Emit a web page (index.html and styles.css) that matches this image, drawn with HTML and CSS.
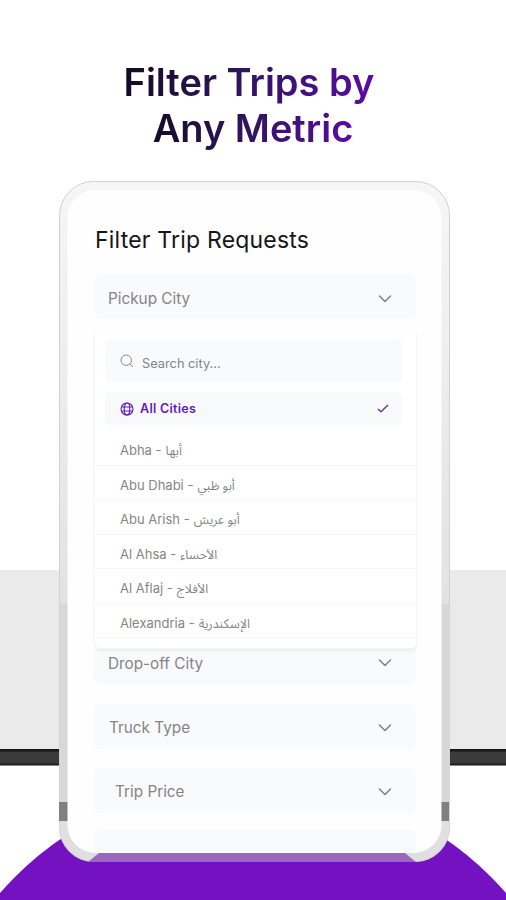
FILE: index.html
```html
<!DOCTYPE html>
<html lang="en">
<head>
<meta charset="utf-8">
<title>Filter Trips by Any Metric</title>
<link rel="stylesheet" href="styles.css">
</head>
<body>
<main class="poster">
  <svg class="backdrop" viewBox="0 0 506 900" aria-hidden="true">
    <defs>
      <linearGradient id="bar" x1="0" x2="0" y1="0" y2="1"><stop offset="0" stop-color="#111"/><stop offset=".12" stop-color="#1c1c1c"/><stop offset=".2" stop-color="#3b3b3b"/><stop offset=".82" stop-color="#3b3b3b"/><stop offset="1" stop-color="#111"/></linearGradient>
    </defs>
    <rect y="570" width="506" height="179" fill="#eaeaea"/>
    <rect y="749" width="506" height="16.5" fill="url(#bar)"/>
    <circle cx="253" cy="1115" r="336.6" fill="#7412c2"/>
  </svg>
  <h1 class="headline"><span class="line line-a">Filter Trips by</span><span class="line line-b">Any Metric</span></h1>
  <section class="phone">
    <svg class="frame" viewBox="0 0 391 681" aria-hidden="true">
      <defs>
        <linearGradient id="rim" x1="0" x2="0" y1="0" y2="1"><stop offset="0" stop-color="#f6f6f6"/><stop offset=".2" stop-color="#f0f0f0"/><stop offset=".4" stop-color="#e9e9e9"/><stop offset=".62" stop-color="#e2e2e2"/><stop offset=".622" stop-color="#d8d8d8"/><stop offset=".91" stop-color="#d8d8d8"/><stop offset=".945" stop-color="#e0e0e0"/><stop offset="1" stop-color="#dfdfdf"/></linearGradient>
        <linearGradient id="edge" x1="0" x2="0" y1="0" y2="1"><stop offset="0" stop-color="#cfcfcf"/><stop offset="1" stop-color="#d4d4d4"/></linearGradient>
      </defs>
      <rect x=".5" y=".5" width="390" height="680" rx="34" fill="url(#rim)" stroke="url(#edge)"/>
      <path d="M0 621h9v19H0zM382 621h8v19h-8z" fill="#808080"/>
      <path d="M40 672H346L357 681H29Z" fill="#9b68bd"/>
      <rect x="8.5" y="9" width="374" height="663" rx="28" fill="#fefefe"/>
    </svg>
    <div class="screen">
      <h2 class="title">Filter Trip Requests</h2>
      <div class="field pickup"><span class="t-pickup">Pickup City</span><svg class="chev" viewBox="0 0 14 8"><path d="M1.5 1 7 6.5 12.5 1"/></svg></div>
      <div class="menu">
        <div class="search"><svg class="glass" viewBox="0 0 14 14"><circle cx="6.2" cy="6.2" r="5.2"/><path d="m10 10 3 3"/></svg><span class="t-search">Search city...</span></div>
        <div class="all"><svg class="globe" viewBox="0 0 14 14"><circle cx="7" cy="7" r="6"/><ellipse cx="7" cy="7" rx="2.8" ry="6"/><path d="M1.5 5h11M1.5 9h11"/></svg><span class="t-all">All Cities</span><svg class="check" viewBox="0 0 12 9"><path d="m1 5 3 2.8L11 1"/></svg></div>
        <ul class="cities">
          <li><span class="en">Abha -</span><span class="ar" lang="ar">أبها</span></li>
          <li><span class="en">Abu Dhabi -</span><span class="ar" lang="ar">أبو ظبي</span></li>
          <li><span class="en">Abu Arish -</span><span class="ar" lang="ar">أبو عريش</span></li>
          <li><span class="en">Al Ahsa -</span><span class="ar" lang="ar">الأحساء</span></li>
          <li><span class="en">Al Aflaj -</span><span class="ar" lang="ar">الأفلاج</span></li>
          <li><span class="en">Alexandria -</span><span class="ar" lang="ar">الإسكندرية</span></li>
        </ul>
      </div>
      <div class="field drop"><span class="t-drop">Drop-off City</span><svg class="chev" viewBox="0 0 14 8"><path d="M1.5 1 7 6.5 12.5 1"/></svg></div>
      <div class="field truck"><span class="t-truck">Truck Type</span><svg class="chev" viewBox="0 0 14 8"><path d="M1.5 1 7 6.5 12.5 1"/></svg></div>
      <div class="field price"><span class="t-price">Trip Price</span><svg class="chev" viewBox="0 0 14 8"><path d="M1.5 1 7 6.5 12.5 1"/></svg></div>
      <div class="field partial"></div>
    </div>
  </section>
</main>
</body>
</html>
```

FILE: styles.css
```css
* { box-sizing: border-box; margin: 0; padding: 0; }
body { width: 506px; height: 900px; overflow: hidden; background: #fff; font-family: Inter, "Liberation Sans", sans-serif; }
svg { display: block; flex: none; }
.poster { position: relative; height: 900px; padding-top: 59px; overflow: hidden; }
.backdrop { position: absolute; inset: 0; width: 506px; height: 900px; }
.headline { position: relative; height: 122px; display: flex; flex-direction: column; align-items: center; font-size: 38px; line-height: 46px; font-weight: 600; }
.line { white-space: nowrap; color: transparent; background: linear-gradient(100deg, #130b25, #32145f 48%, #5a0ba6); -webkit-background-clip: text; background-clip: text; }
.line-a { margin-right: 8px; }
.phone { position: relative; width: 391px; height: 681px; margin-left: 58.5px; }
.frame { position: absolute; inset: 0; width: 391px; height: 681px; }
.screen { position: relative; height: 672px; padding: 43px 34px 0 35.5px; overflow: hidden; }
.title { height: 50px; padding-left: 1px; font-size: 23px; line-height: 32px; font-weight: 400; letter-spacing: .2px; color: #161616; white-space: nowrap; }
.field { height: 45px; display: flex; align-items: center; justify-content: space-between; padding: 2px 24px 0 14px; border-radius: 6px; background: #f8fafc; color: #858585; font-size: 15.3px; white-space: nowrap; }
.pickup { padding-top: 4px; }
.chev { width: 14px; height: 8px; fill: none; stroke: #858585; stroke-width: 1.6; stroke-linecap: round; stroke-linejoin: round; }
.menu { position: relative; z-index: 1; height: 320px; margin: 10px -1px 0 0; padding: 9px 14px 0 10px; background: #fff; border: 1px solid #f6f6f6; border-top-color: #fdfdfd; border-radius: 6px; box-shadow: 0 2px 2px #eceeef; }
.search, .all { display: flex; align-items: center; background: #f8fafb; border-radius: 5px; padding-left: 15px; }
.search { height: 43px; color: #858585; font-size: 12.8px; }
.glass { width: 14px; height: 14px; margin: 0 8px 0 0; fill: none; stroke: #888; stroke-width: 1; }
.t-search { padding-top: 5px; }
.all { height: 33px; margin-top: 10px; padding-right: 13px; background: #f8f9fb; color: #6418b8; font-size: 12.5px; font-weight: 600; letter-spacing: .3px; }
.globe { width: 14px; height: 14px; margin-right: 6px; fill: none; stroke: #6418b8; stroke-width: 1.1; }
.check { width: 12px; height: 9px; margin-left: auto; fill: none; stroke: #6d36b5; stroke-width: 1.5; }
.cities { list-style: none; margin: 6px -14px 0 -10px; }
.cities li { height: 34.5px; display: flex; align-items: center; gap: 4px; padding: 5px 0 0 25px; border-bottom: 1px solid #f6f6f6; color: #858585; font-size: 13px; white-space: nowrap; }
.ar { padding-top: 2px; font-family: "Noto Sans Arabic", "DejaVu Sans", sans-serif; font-size: 12.5px; direction: rtl; }
.drop { height: 36px; margin-top: -1px; padding-top: 0; padding-bottom: 6px; border-top-left-radius: 0; border-top-right-radius: 0; }
.truck { margin-top: 20px; padding-left: 15px; }
.price { margin-top: 19px; padding-left: 21px; }
.partial { height: 24px; margin-top: 17px; border-radius: 6px 6px 0 0; }
```
